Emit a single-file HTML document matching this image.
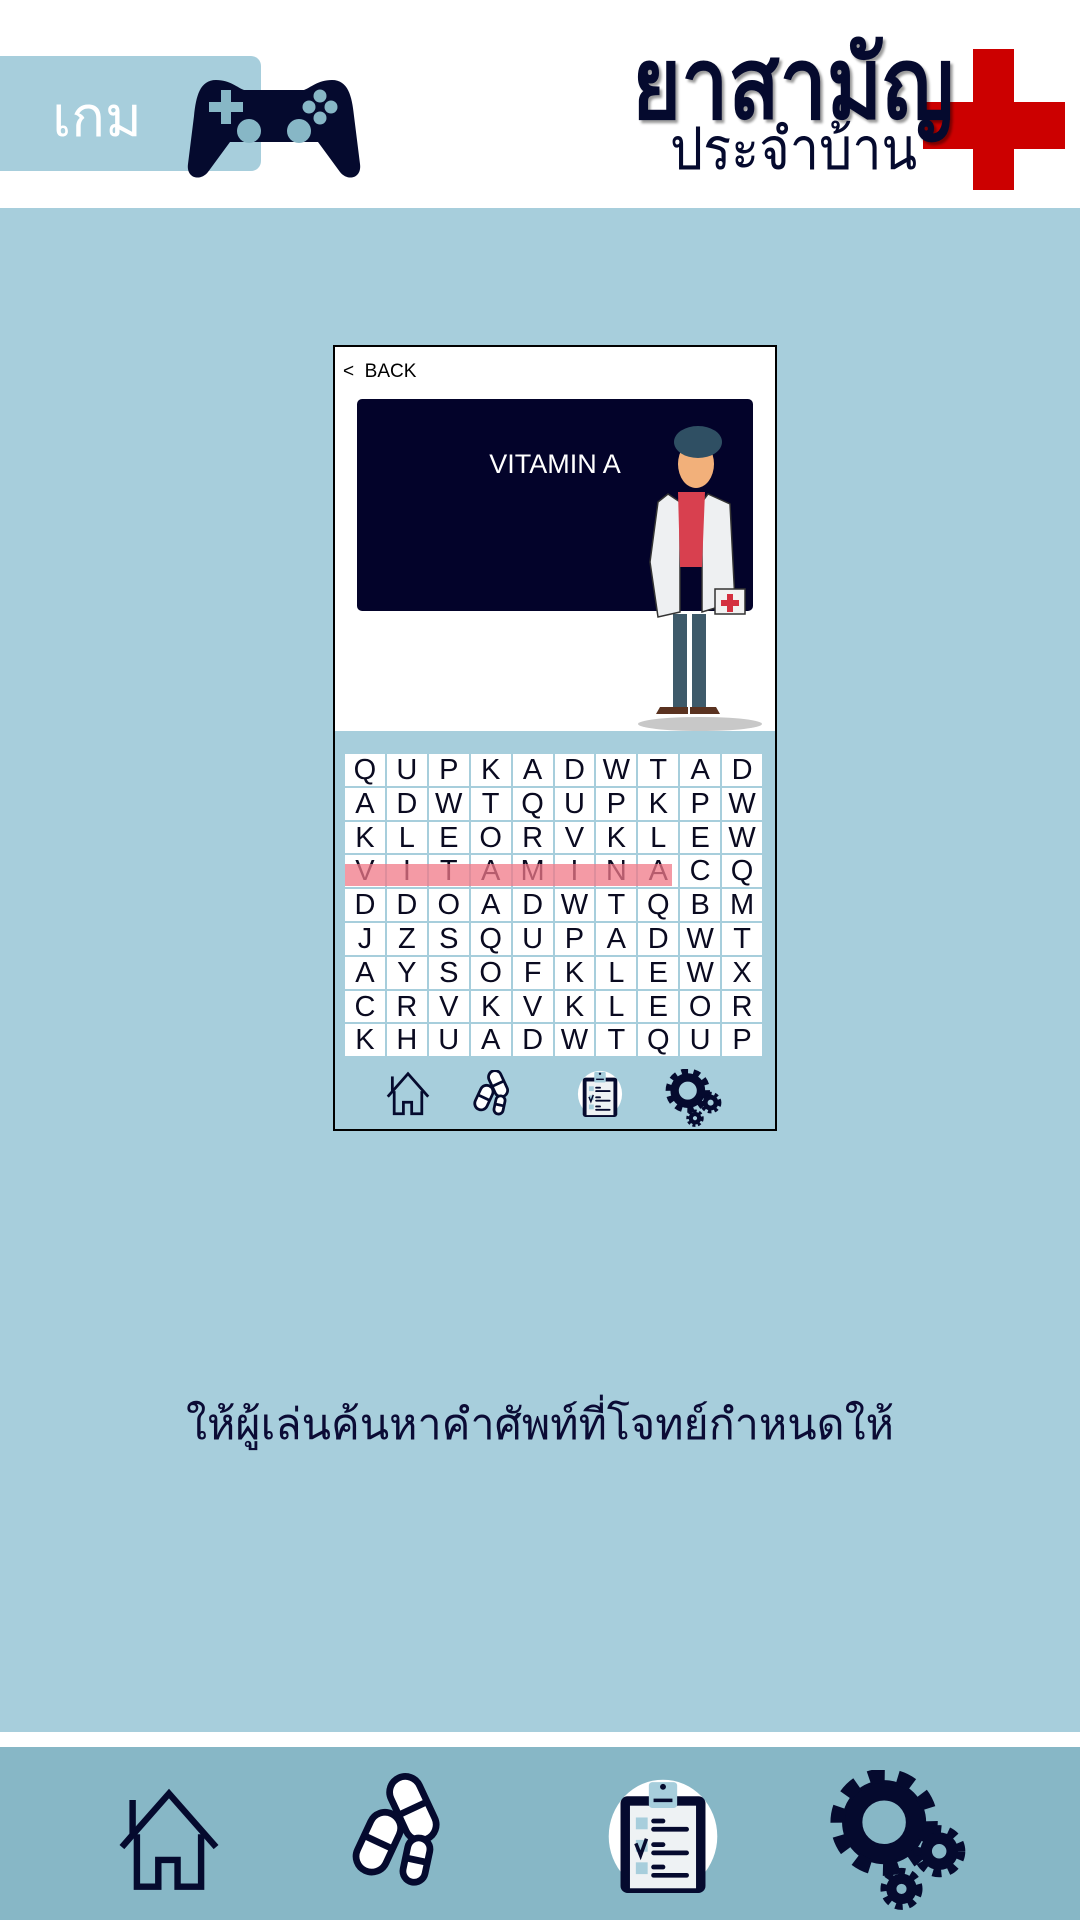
<!DOCTYPE html>
<html><head><meta charset="utf-8">
<style>
*{margin:0;padding:0;box-sizing:border-box}
body{width:1080px;height:1920px;position:relative;overflow:hidden;background:#fff;font-family:"Liberation Sans","Noto Sans CJK SC",sans-serif}
.abs{position:absolute}
#bg{left:0;top:208px;width:1080px;height:1524px;background:#a7cedc}
#bar{left:0;top:1747px;width:1080px;height:173px;background:#87b7c6}
#tab{left:0;top:56px;width:261px;height:115px;background:#a7cedc;border-radius:0 10px 10px 0}
#game{left:52px;top:78px;color:#fff;font-size:56px;font-family:"Noto Sans CJK SC","WenQuanYi Zen Hei",sans-serif;line-height:70px}
#phone{left:333px;top:345px;width:444px;height:786px;border:2px solid #000;background:#a7cedc}
#ptop{left:0;top:0;width:440px;height:384px;background:#fff}
#back{left:8px;top:14px;font-size:19px;color:#000}
#board{left:22px;top:52px;width:396px;height:212px;background:#03032a;border-radius:5px}
#vit{left:0;top:50px;width:396px;text-align:center;color:#fff;font-size:27px}
#grid{left:10px;top:407px;width:417px;display:grid;grid-template-columns:repeat(10,1fr);gap:2px;background:#a7cedc}
#grid div{background:#fff;height:31.8px;text-align:center;font-size:29px;line-height:33px;color:#0a0a20}
#hl{left:10px;top:517px;width:327px;height:22px;background:rgba(240,120,135,0.75);z-index:2}
#instr{left:0;top:1390px;width:1080px;text-align:center;font-size:43px;color:#0b0b35;font-family:"Noto Sans CJK SC","WenQuanYi Zen Hei",sans-serif}
</style></head><body>
<svg width="0" height="0" style="position:absolute">
<defs>
<symbol id="home" viewBox="0 0 100 100">
<g fill="none" stroke="#050a2e" stroke-width="6" stroke-linejoin="miter">
<polyline points="6,58 50,8 94,58"/>
<line x1="16" y1="14" x2="16" y2="46"/>
<polyline points="20,46 20,95 40,95 40,70 58,70 58,95 80,95 80,46"/>
</g></symbol>
<symbol id="pills" viewBox="0 0 100 100">
<g stroke="#050a2e" stroke-width="6" fill="#fff">
<g transform="rotate(-25 58 28)"><rect x="44" y="0" width="28" height="60" rx="14"/><line x1="44" y1="30" x2="72" y2="30"/></g>
<g transform="rotate(25 28 60)"><rect x="14" y="32" width="28" height="56" rx="14"/><line x1="14" y1="60" x2="42" y2="60"/></g>
<g transform="rotate(12 62 76)"><rect x="52" y="56" width="20" height="40" rx="10"/><line x1="52" y1="76" x2="72" y2="76"/></g>
</g></symbol>
<symbol id="clip" viewBox="0 0 100 100">
<ellipse cx="50" cy="52" rx="46" ry="48" fill="#fff"/>
<rect x="14" y="18" width="72" height="82" rx="6" fill="#050a2e"/>
<rect x="22" y="26" width="56" height="70" fill="#eef2f4"/>
<rect x="38" y="6" width="24" height="22" rx="3" fill="#a7cedc"/>
<rect x="42" y="20" width="16" height="3" fill="#050a2e"/>
<circle cx="50" cy="10" r="2.5" fill="#050a2e"/>
<rect x="27" y="36" width="10" height="10" fill="#a7cedc"/><rect x="27" y="55" width="10" height="10" fill="#a7cedc"/><rect x="27" y="74" width="10" height="10" fill="#a7cedc"/>
<g stroke="#050a2e" stroke-width="4" stroke-linecap="round"><line x1="42" y1="39" x2="50" y2="39"/><line x1="42" y1="46" x2="70" y2="46"/><line x1="42" y1="59" x2="50" y2="59"/><line x1="42" y1="66" x2="70" y2="66"/><line x1="42" y1="78" x2="50" y2="78"/><line x1="42" y1="85" x2="70" y2="85"/></g>
<path d="M27 58 L31 68 L36 54" stroke="#050a2e" stroke-width="3" fill="none"/>
</symbol>
<symbol id="gears" viewBox="0 0 100 100">
<g fill="none" stroke="#050a2e">
<circle cx="38" cy="36" r="22" stroke-width="14"/>
<circle cx="38" cy="36" r="32" stroke-width="10" stroke-dasharray="11 9"/>
<circle cx="76" cy="56" r="9" stroke-width="8"/>
<circle cx="76" cy="56" r="15" stroke-width="6" stroke-dasharray="6 5"/>
<circle cx="50" cy="82" r="7" stroke-width="7"/>
<circle cx="50" cy="82" r="12" stroke-width="5" stroke-dasharray="5 4"/>
</g></symbol>
</defs></svg>

<div class="abs" id="bg"></div>
<div class="abs" style="left:0;top:1732px;width:1080px;height:15px;background:#fff"></div>
<div class="abs" id="bar"></div>

<div class="abs" id="tab"></div>
<div class="abs" id="game">เกม</div>
<svg class="abs" style="left:186px;top:76px" width="176" height="105" viewBox="0 0 176 105">
<path d="M30 4 C14 4 10 20 8 40 L2 88 C0 102 14 106 22 96 L44 66 L132 66 L154 96 C162 106 176 102 174 88 L168 40 C166 20 162 4 146 4 C132 4 124 12 118 14 L58 14 C52 12 44 4 30 4 Z" fill="#050a2e"/>
<path d="M35 14 h10 v12 h12 v10 h-12 v12 h-10 v-12 h-12 v-10 h12 z" fill="#87b7c6"/>
<circle cx="134" cy="20" r="6.5" fill="#87b7c6"/><circle cx="134" cy="42" r="6.5" fill="#87b7c6"/><circle cx="123" cy="31" r="6.5" fill="#87b7c6"/><circle cx="145" cy="31" r="6.5" fill="#87b7c6"/>
<circle cx="63" cy="55" r="12" fill="#87b7c6"/><circle cx="113" cy="55" r="12" fill="#87b7c6"/>
</svg>

<div class="abs" style="left:973px;top:49px;width:41px;height:141px;background:#cc0000"></div>
<div class="abs" style="left:923px;top:102px;width:142px;height:47px;background:#cc0000"></div>
<div class="abs" style="left:632px;top:10px;font-size:100px;line-height:130px;font-weight:bold;color:#050a2e;font-family:'Noto Sans CJK SC','WenQuanYi Zen Hei',sans-serif;text-shadow:3px 3px 3px rgba(0,0,0,.4);transform:scaleX(0.84);transform-origin:0 0">ยาสามัญ</div>
<div class="abs" style="left:670px;top:104px;font-size:58px;line-height:80px;color:#050a2e;font-family:'Noto Sans CJK SC','WenQuanYi Zen Hei',sans-serif;transform:scaleX(0.9);transform-origin:0 0">ประจำบ้าน</div>

<div class="abs" id="phone">
<div class="abs" id="ptop"></div>
<div class="abs" id="back">&lt;&nbsp; BACK</div>
<div class="abs" id="board"><div class="abs" id="vit">VITAMIN A</div></div>
<svg class="abs" style="left:270px;top:75px" width="170" height="310" viewBox="630 420 140 310">
<ellipse cx="710" cy="722" rx="62" ry="7" fill="#c8c8c8"/>
<rect x="683" y="612" width="14" height="95" fill="#3e5a6a"/><rect x="702" y="612" width="14" height="95" fill="#3e5a6a"/>
<path d="M670 705 h28 v7 h-32 z M700 705 h26 l4 7 h-30 z" fill="#5a3220"/>
<path d="M678 492 L668 500 L660 560 L668 615 L690 610 L690 500 Z" fill="#eef0f2" stroke="#333" stroke-width="1.5"/>
<path d="M718 492 L740 502 L745 600 L712 610 L712 500 Z" fill="#eef0f2" stroke="#333" stroke-width="1.5"/>
<path d="M688 490 L715 490 L712 565 L690 565 Z" fill="#d8404f"/>
<rect x="725" y="587" width="30" height="25" fill="#f2f2f2" stroke="#333" stroke-width="1.5"/>
<path d="M737 592 h6 v6 h6 v6 h-6 v6 h-6 v-6 h-6 v-6 h6 z" fill="#d43040"/>
<ellipse cx="706" cy="462" rx="18" ry="24" fill="#f2b07a"/>
<ellipse cx="708" cy="440" rx="24" ry="16" fill="#2f4f63"/>
</svg>
<div class="abs" id="grid">
<div>Q</div><div>U</div><div>P</div><div>K</div><div>A</div><div>D</div><div>W</div><div>T</div><div>A</div><div>D</div>
<div>A</div><div>D</div><div>W</div><div>T</div><div>Q</div><div>U</div><div>P</div><div>K</div><div>P</div><div>W</div>
<div>K</div><div>L</div><div>E</div><div>O</div><div>R</div><div>V</div><div>K</div><div>L</div><div>E</div><div>W</div>
<div>V</div><div>I</div><div>T</div><div>A</div><div>M</div><div>I</div><div>N</div><div>A</div><div>C</div><div>Q</div>
<div>D</div><div>D</div><div>O</div><div>A</div><div>D</div><div>W</div><div>T</div><div>Q</div><div>B</div><div>M</div>
<div>J</div><div>Z</div><div>S</div><div>Q</div><div>U</div><div>P</div><div>A</div><div>D</div><div>W</div><div>T</div>
<div>A</div><div>Y</div><div>S</div><div>O</div><div>F</div><div>K</div><div>L</div><div>E</div><div>W</div><div>X</div>
<div>C</div><div>R</div><div>V</div><div>K</div><div>V</div><div>K</div><div>L</div><div>E</div><div>O</div><div>R</div>
<div>K</div><div>H</div><div>U</div><div>A</div><div>D</div><div>W</div><div>T</div><div>Q</div><div>U</div><div>P</div>
</div>
<div class="abs" id="hl"></div>
<svg class="abs" style="left:50px;top:723px" width="46" height="46"><use href="#home"/></svg>
<svg class="abs" style="left:136px;top:723px" width="46" height="46"><use href="#pills"/></svg>
<svg class="abs" style="left:241px;top:722px" width="48" height="48"><use href="#clip"/></svg>
<svg class="abs" style="left:330px;top:722px" width="60" height="60"><use href="#gears"/></svg>
</div>

<div class="abs" id="instr">ให้ผู้เล่นค้นหาคำศัพท์ที่โจทย์กำหนดให้</div>

<svg class="abs" style="left:114px;top:1785px" width="110" height="107"><use href="#home"/></svg>
<svg class="abs" style="left:347px;top:1770px" width="112" height="122"><use href="#pills"/></svg>
<svg class="abs" style="left:604px;top:1775px" width="118" height="118"><use href="#clip"/></svg>
<svg class="abs" style="left:829px;top:1770px" width="145" height="145"><use href="#gears"/></svg>
</body></html>
